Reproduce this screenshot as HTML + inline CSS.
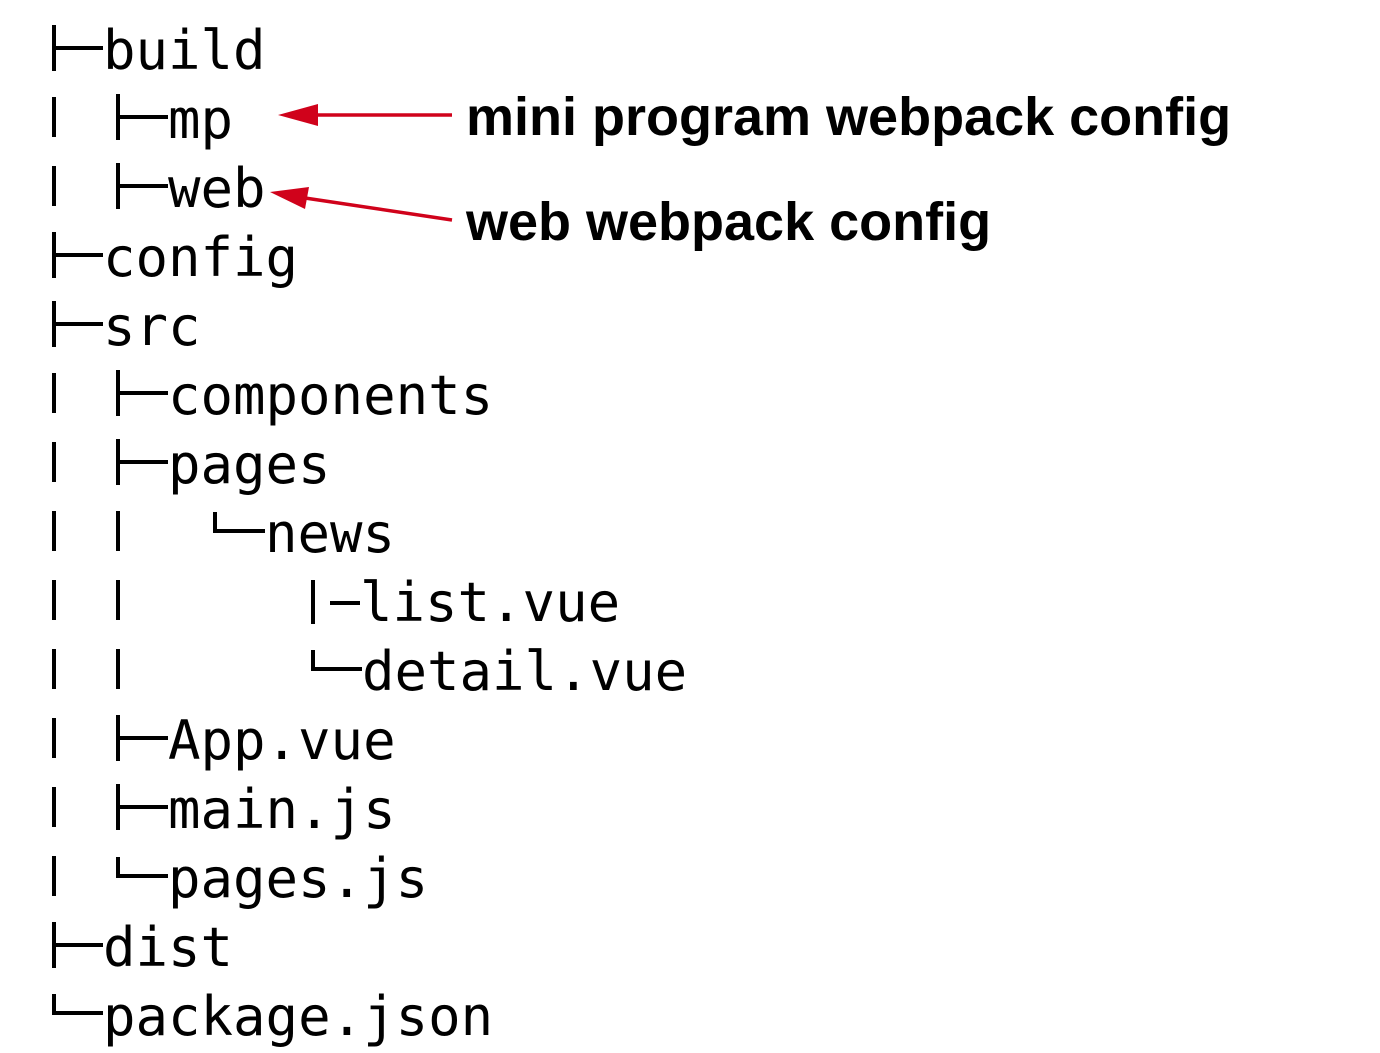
<!DOCTYPE html>
<html><head><meta charset="utf-8"><style>
html,body{margin:0;padding:0;background:#fff;width:1380px;height:1053px;overflow:hidden;position:relative}
.t{position:absolute;font-family:"DejaVu Sans Mono","Liberation Mono",monospace;font-size:54px;line-height:69px;color:#000;white-space:pre}
.a{position:absolute;font-family:"Liberation Sans",Arial,sans-serif;font-weight:bold;font-size:54px;line-height:60px;color:#000;white-space:pre}
svg{position:absolute;left:0;top:0}
</style></head><body>
<svg width="1380" height="1053" viewBox="0 0 1380 1053">
<g stroke="#000" stroke-width="4" fill="none">
<path d="M54 25V71M54 48H103"/>
<path d="M54 97V137M118 94V140M118 117H168"/>
<path d="M54 166V206M118 163V209M118 186H168"/>
<path d="M54 232V278M54 255H103"/>
<path d="M54 301V347M54 324H103"/>
<path d="M54 373V413M118 370V416M118 393H168"/>
<path d="M54 442V482M118 439V485M118 462H168"/>
<path d="M54 511V551M118 511V551M215 512V531H265"/>
<path d="M54 580V620M118 580V620M313 580V624M330 603H360"/>
<path d="M54 649V689M118 649V689M313 650V669H362"/>
<path d="M54 718V758M118 715V761M118 738H168"/>
<path d="M54 787V827M118 784V830M118 807H168"/>
<path d="M54 856V896M118 857V876H168"/>
<path d="M54 922V968M54 945H103"/>
<path d="M54 994V1013H103"/>
</g>
<g fill="#d0021b" stroke="#d0021b">
<path d="M316 115H452" stroke-width="3.5"/>
<path d="M278 115L318 104V126Z" stroke="none"/>
<path d="M305 198L452 220" stroke-width="3.5"/>
<path d="M270 192L309 187L305 209Z" stroke="none"/>
</g>
</svg>
<div class="t" style="left:103px;top:16px">build</div>
<div class="t" style="left:168px;top:85px">mp</div>
<div class="t" style="left:168px;top:154px">web</div>
<div class="t" style="left:103px;top:223px">config</div>
<div class="t" style="left:103px;top:292px">src</div>
<div class="t" style="left:168px;top:361px">components</div>
<div class="t" style="left:168px;top:430px">pages</div>
<div class="t" style="left:265px;top:499px">news</div>
<div class="t" style="left:360px;top:568px">list.vue</div>
<div class="t" style="left:362px;top:637px">detail.vue</div>
<div class="t" style="left:168px;top:706px">App.vue</div>
<div class="t" style="left:168px;top:775px">main.js</div>
<div class="t" style="left:168px;top:844px">pages.js</div>
<div class="t" style="left:103px;top:913px">dist</div>
<div class="t" style="left:103px;top:982px">package.json</div>
<div class="a" style="left:466px;top:87px">mini program webpack config</div>
<div class="a" style="left:466px;top:192px">web webpack config</div>
</body></html>
